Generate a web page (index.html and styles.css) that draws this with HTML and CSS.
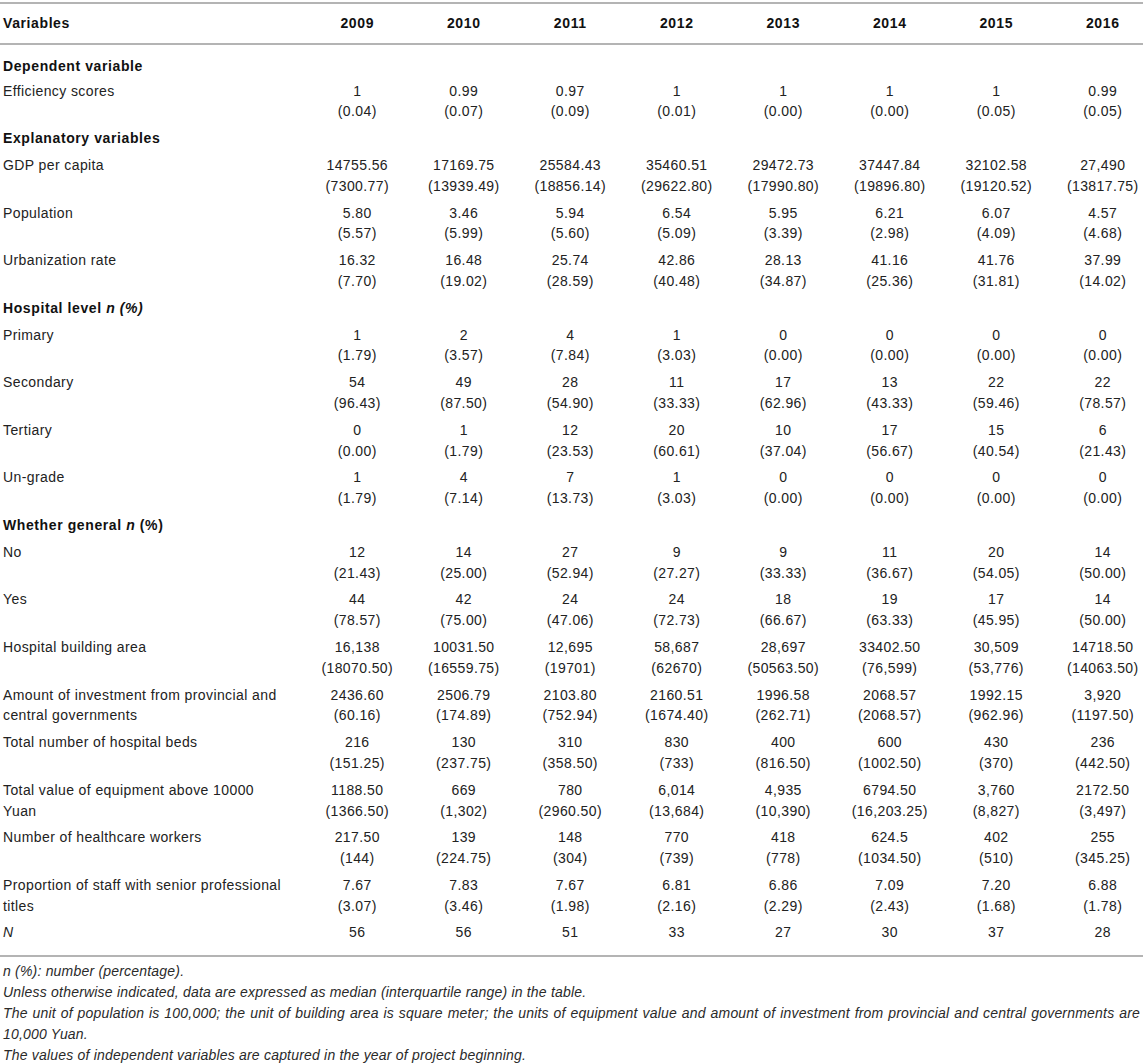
FILE: index.html
```html
<!DOCTYPE html>
<html lang="en">
<head>
    <meta charset="UTF-8">
    <meta name="viewport" content="width=device-width, initial-scale=1.0">
    <title>Descriptive statistics by year</title>
    <link rel="stylesheet" href="styles.css">
</head>
<body>
    <div class="table-wrap">
        <table class="stats-table">
            <colgroup>
                <col class="col-label">
                <col class="col-year"><col class="col-year"><col class="col-year"><col class="col-year">
                <col class="col-year"><col class="col-year"><col class="col-year"><col class="col-year">
            </colgroup>
            <thead>
                <tr>
                    <th class="label">Variables</th>
                    <th>2009</th><th>2010</th><th>2011</th><th>2012</th>
                    <th>2013</th><th>2014</th><th>2015</th><th>2016</th>
                </tr>
            </thead>
            <tbody>
                <tr class="section first"><td colspan="9">Dependent variable</td></tr>
                <tr>
                    <td class="label">Efficiency scores</td>
                    <td>1<br>(0.04)</td><td>0.99<br>(0.07)</td><td>0.97<br>(0.09)</td><td>1<br>(0.01)</td>
                    <td>1<br>(0.00)</td><td>1<br>(0.00)</td><td>1<br>(0.05)</td><td>0.99<br>(0.05)</td>
                </tr>
                <tr class="section"><td colspan="9">Explanatory variables</td></tr>
                <tr>
                    <td class="label">GDP per capita</td>
                    <td>14755.56<br>(7300.77)</td><td>17169.75<br>(13939.49)</td><td>25584.43<br>(18856.14)</td><td>35460.51<br>(29622.80)</td>
                    <td>29472.73<br>(17990.80)</td><td>37447.84<br>(19896.80)</td><td>32102.58<br>(19120.52)</td><td>27,490<br>(13817.75)</td>
                </tr>
                <tr>
                    <td class="label">Population</td>
                    <td>5.80<br>(5.57)</td><td>3.46<br>(5.99)</td><td>5.94<br>(5.60)</td><td>6.54<br>(5.09)</td>
                    <td>5.95<br>(3.39)</td><td>6.21<br>(2.98)</td><td>6.07<br>(4.09)</td><td>4.57<br>(4.68)</td>
                </tr>
                <tr>
                    <td class="label">Urbanization rate</td>
                    <td>16.32<br>(7.70)</td><td>16.48<br>(19.02)</td><td>25.74<br>(28.59)</td><td>42.86<br>(40.48)</td>
                    <td>28.13<br>(34.87)</td><td>41.16<br>(25.36)</td><td>41.76<br>(31.81)</td><td>37.99<br>(14.02)</td>
                </tr>
                <tr class="section"><td colspan="9">Hospital level <i>n (%)</i></td></tr>
                <tr>
                    <td class="label">Primary</td>
                    <td>1<br>(1.79)</td><td>2<br>(3.57)</td><td>4<br>(7.84)</td><td>1<br>(3.03)</td>
                    <td>0<br>(0.00)</td><td>0<br>(0.00)</td><td>0<br>(0.00)</td><td>0<br>(0.00)</td>
                </tr>
                <tr>
                    <td class="label">Secondary</td>
                    <td>54<br>(96.43)</td><td>49<br>(87.50)</td><td>28<br>(54.90)</td><td>11<br>(33.33)</td>
                    <td>17<br>(62.96)</td><td>13<br>(43.33)</td><td>22<br>(59.46)</td><td>22<br>(78.57)</td>
                </tr>
                <tr>
                    <td class="label">Tertiary</td>
                    <td>0<br>(0.00)</td><td>1<br>(1.79)</td><td>12<br>(23.53)</td><td>20<br>(60.61)</td>
                    <td>10<br>(37.04)</td><td>17<br>(56.67)</td><td>15<br>(40.54)</td><td>6<br>(21.43)</td>
                </tr>
                <tr>
                    <td class="label">Un-grade</td>
                    <td>1<br>(1.79)</td><td>4<br>(7.14)</td><td>7<br>(13.73)</td><td>1<br>(3.03)</td>
                    <td>0<br>(0.00)</td><td>0<br>(0.00)</td><td>0<br>(0.00)</td><td>0<br>(0.00)</td>
                </tr>
                <tr class="section"><td colspan="9">Whether general <i>n</i> (%)</td></tr>
                <tr>
                    <td class="label">No</td>
                    <td>12<br>(21.43)</td><td>14<br>(25.00)</td><td>27<br>(52.94)</td><td>9<br>(27.27)</td>
                    <td>9<br>(33.33)</td><td>11<br>(36.67)</td><td>20<br>(54.05)</td><td>14<br>(50.00)</td>
                </tr>
                <tr>
                    <td class="label">Yes</td>
                    <td>44<br>(78.57)</td><td>42<br>(75.00)</td><td>24<br>(47.06)</td><td>24<br>(72.73)</td>
                    <td>18<br>(66.67)</td><td>19<br>(63.33)</td><td>17<br>(45.95)</td><td>14<br>(50.00)</td>
                </tr>
                <tr>
                    <td class="label">Hospital building area</td>
                    <td>16,138<br>(18070.50)</td><td>10031.50<br>(16559.75)</td><td>12,695<br>(19701)</td><td>58,687<br>(62670)</td>
                    <td>28,697<br>(50563.50)</td><td>33402.50<br>(76,599)</td><td>30,509<br>(53,776)</td><td>14718.50<br>(14063.50)</td>
                </tr>
                <tr>
                    <td class="label">Amount of investment from provincial and central governments</td>
                    <td>2436.60<br>(60.16)</td><td>2506.79<br>(174.89)</td><td>2103.80<br>(752.94)</td><td>2160.51<br>(1674.40)</td>
                    <td>1996.58<br>(262.71)</td><td>2068.57<br>(2068.57)</td><td>1992.15<br>(962.96)</td><td>3,920<br>(1197.50)</td>
                </tr>
                <tr>
                    <td class="label">Total number of hospital beds</td>
                    <td>216<br>(151.25)</td><td>130<br>(237.75)</td><td>310<br>(358.50)</td><td>830<br>(733)</td>
                    <td>400<br>(816.50)</td><td>600<br>(1002.50)</td><td>430<br>(370)</td><td>236<br>(442.50)</td>
                </tr>
                <tr>
                    <td class="label">Total value of equipment above 10000 Yuan</td>
                    <td>1188.50<br>(1366.50)</td><td>669<br>(1,302)</td><td>780<br>(2960.50)</td><td>6,014<br>(13,684)</td>
                    <td>4,935<br>(10,390)</td><td>6794.50<br>(16,203.25)</td><td>3,760<br>(8,827)</td><td>2172.50<br>(3,497)</td>
                </tr>
                <tr>
                    <td class="label">Number of healthcare workers</td>
                    <td>217.50<br>(144)</td><td>139<br>(224.75)</td><td>148<br>(304)</td><td>770<br>(739)</td>
                    <td>418<br>(778)</td><td>624.5<br>(1034.50)</td><td>402<br>(510)</td><td>255<br>(345.25)</td>
                </tr>
                <tr>
                    <td class="label">Proportion of staff with senior professional titles</td>
                    <td>7.67<br>(3.07)</td><td>7.83<br>(3.46)</td><td>7.67<br>(1.98)</td><td>6.81<br>(2.16)</td>
                    <td>6.86<br>(2.29)</td><td>7.09<br>(2.43)</td><td>7.20<br>(1.68)</td><td>6.88<br>(1.78)</td>
                </tr>
                <tr class="last">
                    <td class="label"><i>N</i></td>
                    <td>56</td><td>56</td><td>51</td><td>33</td>
                    <td>27</td><td>30</td><td>37</td><td>28</td>
                </tr>
            </tbody>
        </table>
    </div>

    <div class="notes">
        <p>n (%): number (percentage).</p>
        <p>Unless otherwise indicated, data are expressed as median (interquartile range) in the table.</p>
        <p>The unit of population is 100,000; the unit of building area is square meter; the units of equipment value and amount of investment from provincial and central governments are 10,000 Yuan.</p>
        <p>The values of independent variables are captured in the year of project beginning.</p>
    </div>
</body>
</html>
```

FILE: styles.css
```css
* {
    margin: 0;
    padding: 0;
    box-sizing: border-box;
}

body {
    background: #fff;
    color: #222;
    font-family: 'Liberation Sans', Arial, sans-serif;
    font-size: 14px;
    letter-spacing: 0.4px;
}

.table-wrap {
    overflow: hidden;
    padding-top: 2px;
}

.stats-table {
    width: 1156px;
    table-layout: fixed;
    border-collapse: separate;
    border-spacing: 0;
}

.col-label {
    width: 304px;
}

.col-year {
    width: 106.5px;
}

.stats-table th,
.stats-table td {
    line-height: 20.8px;
    padding: 3px 0;
    text-align: center;
    vertical-align: top;
    white-space: nowrap;
}

.stats-table thead th {
    padding: 9px 0;
    color: #111;
    font-weight: bold;
    letter-spacing: 0.6px;
    border-top: 2px solid #b4b4b4;
    border-bottom: 2px solid #b4b4b4;
}

.stats-table .label {
    text-align: left;
    white-space: normal;
    padding-left: 3px;
    padding-right: 16px;
}

.stats-table thead th.label {
    padding-left: 3px;
}

.section td {
    text-align: left;
    padding-left: 3px;
    color: #111;
    font-weight: bold;
    letter-spacing: 0.6px;
}

.section.first td {
    padding-top: 11px;
    padding-bottom: 1px;
}

.last td {
    padding-bottom: 12px;
    border-bottom: 2px solid #b4b4b4;
}

.notes {
    padding: 4px 3px 0;
    color: #2a2a2a;
    font-style: italic;
    line-height: 21px;
    letter-spacing: 0.2px;
    text-align: justify;
}
```
